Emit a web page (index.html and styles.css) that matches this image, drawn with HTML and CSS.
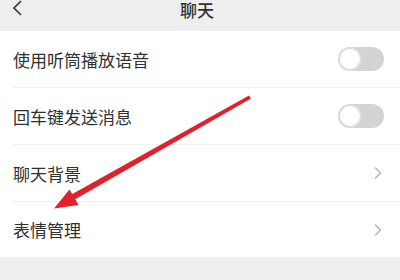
FILE: index.html
```html
<!DOCTYPE html>
<html>
<head>
<meta charset="utf-8">
<link rel="stylesheet" href="styles.css">
</head>
<body>
<div class="page">
  <div class="header">
    <svg class="back" width="12" height="16" viewBox="0 0 12 16"><path d="M10 1 L3 8 L10 15" fill="none" stroke="#333" stroke-width="1.6"/></svg>
    <span class="title">聊天</span>
  </div>
  <div class="list">
    <div class="row"><span class="label">使用听筒播放语音</span><span class="toggle"><span class="knob"></span></span></div>
    <div class="row"><span class="label">回车键发送消息</span><span class="toggle"><span class="knob"></span></span></div>
    <div class="row"><span class="label">聊天背景</span><svg class="chev" width="10" height="14" viewBox="0 0 10 14"><path d="M2 1.5 L7.5 7 L2 12.5" fill="none" stroke="#b8b8b8" stroke-width="1.6"/></svg></div>
    <div class="row last"><span class="label">表情管理</span><svg class="chev" width="10" height="14" viewBox="0 0 10 14"><path d="M2 1.5 L7.5 7 L2 12.5" fill="none" stroke="#b8b8b8" stroke-width="1.6"/></svg></div>
  </div>
  <div class="footer"></div>
  <svg class="arrow" width="400" height="280" viewBox="0 0 400 280">
    <polygon points="251,98.5 249,95.5 69.6,195.6 72.6,200.8" fill="#e0212b"/>
    <polygon points="54,208.5 69.5,189.5 78.5,205" fill="#e0212b"/>
  </svg>
</div>
</body>
</html>
```
FILE: styles.css
```css
html, body { margin: 0; padding: 0; }
body { width: 400px; height: 280px; overflow: hidden; background: #fff; font-family: "Noto Sans CJK SC", "Noto Sans", sans-serif; color: #333; }
.page { position: relative; width: 400px; height: 280px; display: flex; flex-direction: column; }
.header { height: 31px; background: #eeeeee; position: relative; display: flex; align-items: flex-start; justify-content: center; }
.back { position: absolute; left: 11px; top: 0px; }
.title { font-size: 17px; line-height: 19px; margin-top: 0; font-weight: 500; color: #2e2e2e; margin-left: -6px; }
.list { display: flex; flex-direction: column; }
.row { height: 56px; margin-left: 13px; padding-right: 16px; border-bottom: 1px solid #f0f0f0; display: flex; align-items: center; justify-content: space-between; }
.row.last { height: 55px; border-bottom: none; }
.label { font-size: 17px; letter-spacing: 0; color: #303030; }
.toggle { width: 46px; height: 24px; border-radius: 12px; background: #d3d3d3; position: relative; }
.knob { position: absolute; left: 0; top: 0; width: 20px; height: 20px; border-radius: 50%; background: #fff; border: 2px solid #dcdcdc; }
.chev { margin-right: 1px; }
.footer { flex: 1; background: #efefef; }
.arrow { position: absolute; left: 0; top: 0; }
```
